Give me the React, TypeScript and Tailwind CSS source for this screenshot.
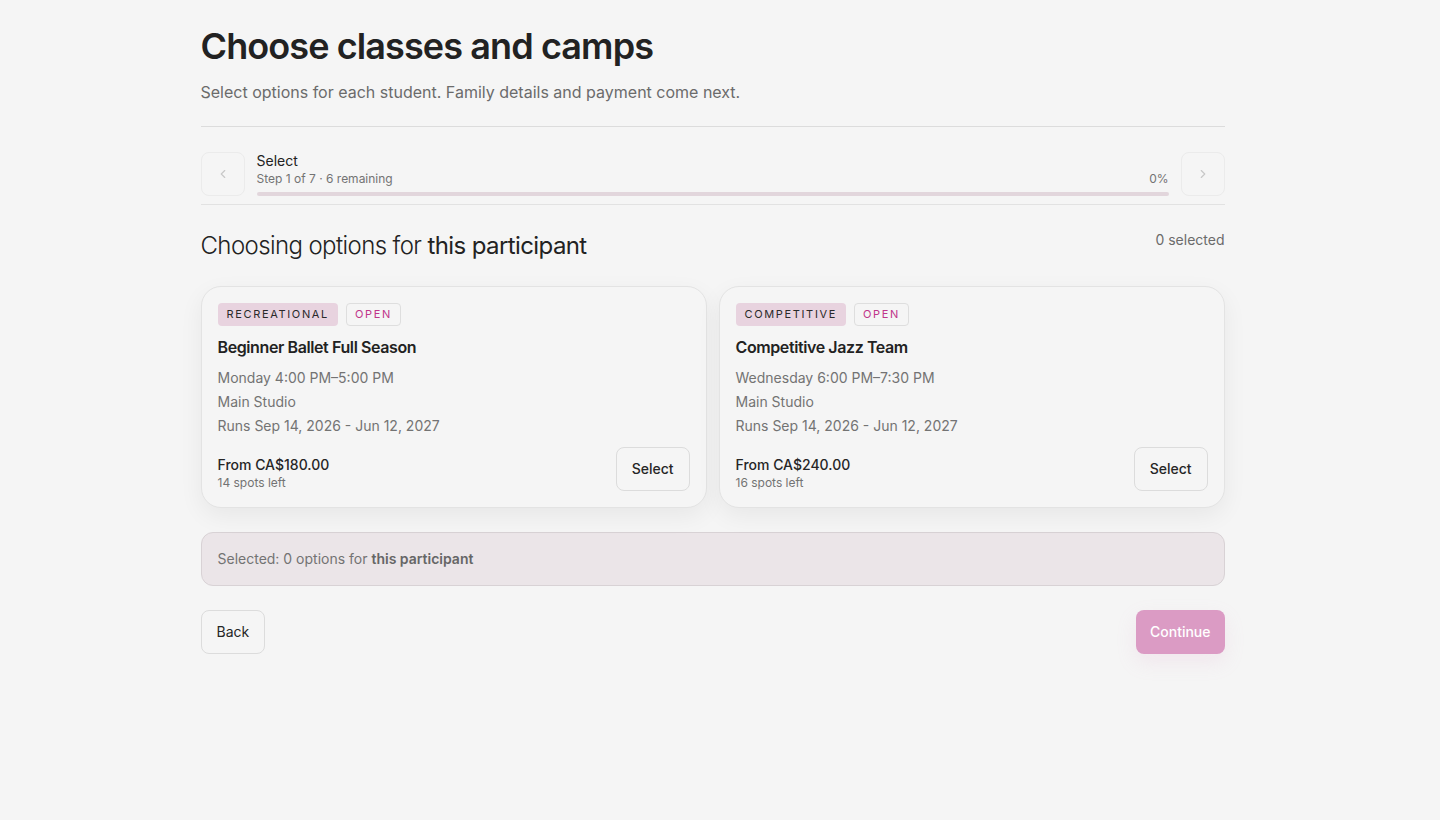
import { ChevronLeft, ChevronRight } from 'lucide-react';

type Offering = {
  category: string;
  name: string;
  schedule: string;
  location: string;
  runs: string;
  price: string;
  spots: string;
};

const offerings: Offering[] = [
  {
    category: 'RECREATIONAL',
    name: 'Beginner Ballet Full Season',
    schedule: 'Monday 4:00 PM–5:00 PM',
    location: 'Main Studio',
    runs: 'Runs Sep 14, 2026 - Jun 12, 2027',
    price: 'From CA$180.00',
    spots: '14 spots left'
  },
  {
    category: 'COMPETITIVE',
    name: 'Competitive Jazz Team',
    schedule: 'Wednesday 6:00 PM–7:30 PM',
    location: 'Main Studio',
    runs: 'Runs Sep 14, 2026 - Jun 12, 2027',
    price: 'From CA$240.00',
    spots: '16 spots left'
  }
];

function OfferingCard({ offering }: { offering: Offering }) {
  return (
    <div className="rounded-[20px] border border-[#e3e3e3] bg-[#f5f5f5] p-4 shadow-[0_8px_24px_rgba(0,0,0,0.06)]">
      <div className="flex items-center gap-2">
        <span className="rounded-[4px] bg-[#e8d3df] px-[9px] py-[5px] text-[11px] font-normal leading-[13px] tracking-[0.15em] text-[#2a2a2a]">
          {offering.category}
        </span>
        <span className="rounded-[4px] border border-[#dedede] px-2 py-1 text-[11px] font-normal leading-[13px] tracking-[0.15em] text-[#c0368a]">
          OPEN
        </span>
      </div>
      <h3 className="mt-[9px] text-base font-semibold leading-6 tracking-tight text-[#222]">{offering.name}</h3>
      <div className="mt-[7px] text-sm leading-6 text-[#737373]">
        <p>{offering.schedule}</p>
        <p>{offering.location}</p>
        <p>{offering.runs}</p>
      </div>
      <div className="mt-[17px] flex items-center justify-between">
        <div>
          <p className="text-sm font-medium leading-5 text-[#262626]">{offering.price}</p>
          <p className="text-xs leading-4 text-[#737373]">{offering.spots}</p>
        </div>
        <button
          type="button"
          className="-mt-[8px] h-11 rounded-lg border border-[#dcdcdc] bg-[#f5f5f5] px-[15px] text-sm font-medium text-[#262626]"
        >
          Select
        </button>
      </div>
    </div>
  );
}

export default function App() {
  return (
    <div
      className="min-h-[820px] bg-[#f5f5f5] pr-[15px] text-[#222]"
      style={{ fontFamily: 'Inter, "Noto Sans", sans-serif' }}
    >
      <div className="mx-auto max-w-[1024px] pt-[24px]">
        <h1 className="text-[36px] font-semibold leading-[44px] tracking-[-0.025em] text-[#222]">
          Choose classes and camps
        </h1>
        <p className="mt-[12px] text-base leading-6 text-[#6b6b6b]">
          Select options for each student. Family details and payment come next.
        </p>

        <div className="mt-[22px] border-t border-[#dcdcdc]" />

        {/* Stepper */}
        <div className="flex items-center gap-3 border-b border-[#e2e2e2] pb-[8px] pt-[24px]">
          <button
            type="button"
            className="flex h-11 w-11 shrink-0 items-center justify-center rounded-lg border border-[#ebebeb] text-[#c8c8c8]"
          >
            <ChevronLeft size={14} />
          </button>
          <div className="flex-1">
            <p className="text-sm leading-5 text-[#222]">Select</p>
            <div className="flex items-center justify-between">
              <p className="text-xs leading-4 text-[#737373]">Step 1 of 7 · 6 remaining</p>
              <p className="text-xs leading-4 text-[#737373]">0%</p>
            </div>
            <div className="mt-[5px] h-[4px] rounded-full bg-[#e2d6dc]" />
          </div>
          <button
            type="button"
            className="flex h-11 w-11 shrink-0 items-center justify-center rounded-lg border border-[#ebebeb] text-[#c8c8c8]"
          >
            <ChevronRight size={14} />
          </button>
        </div>

        {/* Participant heading */}
        <div className="mt-[25px] flex items-start justify-between">
          <h2 className="text-2xl font-light leading-8 tracking-tight text-[#222]">
            Choosing options for <span className="font-normal">this participant</span>
          </h2>
          <span className="text-sm leading-5 text-[#6b6b6b]">0 selected</span>
        </div>

        <div className="mt-[24px] grid grid-cols-2 gap-3">
          {offerings.map((o) => (
            <OfferingCard key={o.name} offering={o} />
          ))}
        </div>

        <div className="mt-[24px] rounded-xl border border-[#d8d2d5] bg-[#ebe5e8] px-4 py-4 text-sm leading-5 text-[#737373]">
          Selected: 0 options for <span className="font-semibold text-[#666]">this participant</span>
        </div>

        <div className="mt-[24px] flex items-center justify-between">
          <button
            type="button"
            className="h-11 rounded-lg border border-[#dcdcdc] px-[15px] text-sm font-normal text-[#262626]"
          >
            Back
          </button>
          <button
            type="button"
            className="h-11 rounded-lg bg-[#db9bc4] px-[14px] text-sm font-medium text-white shadow-[0_8px_20px_rgba(219,155,196,0.15)]"
          >
            Continue
          </button>
        </div>
      </div>
    </div>
  );
}
